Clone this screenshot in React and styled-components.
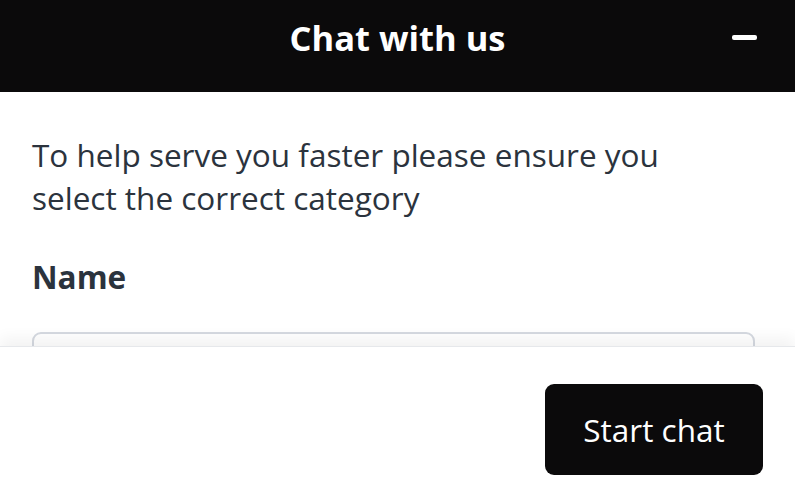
import styled, { createGlobalStyle } from "styled-components";

const GlobalStyle = createGlobalStyle`
  html, body {
    margin: 0;
    padding: 0;
    background: #ffffff;
  }
  body {
    font-family: "Open Sans", "Noto Sans", sans-serif;
  }
`;

const Widget = styled.div`
  width: 795px;
  height: 500px;
  display: flex;
  flex-direction: column;
  background: #ffffff;
  overflow: hidden;
`;

const Header = styled.div`
  height: 92px;
  flex-shrink: 0;
  background: #0b0a0b;
  display: flex;
  align-items: center;
  justify-content: center;
  position: relative;
`;

const Title = styled.h1`
  margin: 0 0 16px;
  color: #ffffff;
  font-size: 34.5px;
  font-weight: 700;
  line-height: 40px;
`;

const MinimizeButton = styled.button`
  position: absolute;
  right: 38px;
  top: 35px;
  width: 25px;
  height: 5px;
  padding: 0;
  border: none;
  border-radius: 2px;
  background: #ffffff;
  cursor: pointer;
`;

const Body = styled.div`
  flex: 1;
  overflow: hidden;
  padding: 0 40px 0 32px;
`;

const Intro = styled.p`
  margin: 41px 0 0;
  color: #2b333d;
  font-size: 31.5px;
  line-height: 43px;
  white-space: nowrap;
`;

const Label = styled.label`
  display: block;
  margin-top: 36px;
  color: #2b333d;
  font-size: 31.5px;
  font-weight: 700;
  line-height: 43px;
`;

const Input = styled.input`
  display: block;
  box-sizing: border-box;
  width: 723px;
  height: 52px;
  margin-top: 34px;
  border: 2px solid #d5d9e0;
  border-radius: 9px;
  background: #ffffff;
`;

const Footer = styled.div`
  height: 154px;
  flex-shrink: 0;
  display: flex;
  justify-content: flex-end;
  align-items: flex-start;
  padding: 37px 32px 0 0;
  box-sizing: border-box;
  background: #ffffff;
  border-top: 1px solid #e6e8eb;
  box-shadow: 0 -8px 14px rgba(0, 0, 0, 0.05);
  position: relative;
`;

const StartButton = styled.button`
  width: 218px;
  height: 91px;
  border: none;
  border-radius: 9px;
  background: #0b0a0b;
  color: #ffffff;
  font-family: "Open Sans", "Noto Sans", sans-serif;
  font-size: 31.5px;
  font-weight: 400;
  cursor: pointer;
`;

export default function App() {
  return (
    <>
      <GlobalStyle />
      <Widget>
        <Header>
          <Title>Chat with us</Title>
          <MinimizeButton aria-label="Minimize" />
        </Header>
        <Body>
          <Intro>
            To help serve you faster please ensure you
            <br />
            select the correct category
          </Intro>
          <Label htmlFor="name">Name</Label>
          <Input id="name" type="text" />
        </Body>
        <Footer>
          <StartButton type="button">Start chat</StartButton>
        </Footer>
      </Widget>
    </>
  );
}
